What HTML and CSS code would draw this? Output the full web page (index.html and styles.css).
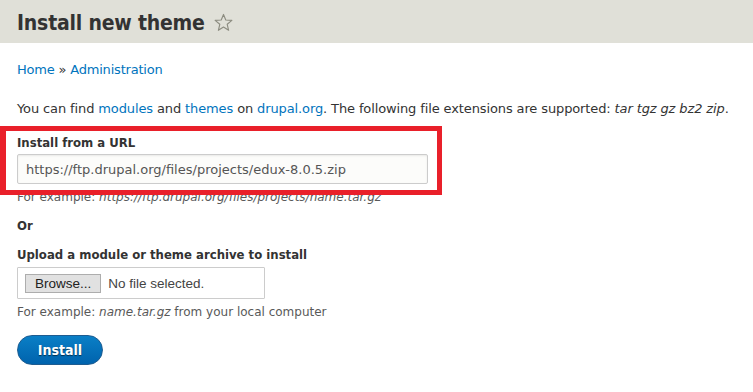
FILE: index.html
```html
<!DOCTYPE html>
<html>
<head>
<meta charset="utf-8">
<link rel="stylesheet" href="styles.css">
</head>
<body>
<header class="page-head">
  <h1 class="title">Install new theme <span class="star"><svg width="19" height="19" viewBox="0 0 20 20"><path d="M10 1.5 L12.4 7.4 L18.8 7.8 L13.9 11.9 L15.4 18.2 L10 14.8 L4.6 18.2 L6.1 11.9 L1.2 7.8 L7.6 7.4 Z" fill="none" stroke="#8c8c80" stroke-width="1.2" stroke-linejoin="round"/></svg></span></h1>
</header>
<main class="content">
  <nav class="crumbs"><a href="#">Home</a> » <a href="#">Administration</a></nav>
  <p class="intro">You can find <a href="#">modules</a> and <a href="#">themes</a> on <a href="#">drupal.org</a>. The following file extensions are supported: <em>tar tgz gz bz2 zip</em>.</p>
  <div class="url-block">
    <div class="highlight">
      <label class="label">Install from a URL</label>
      <div class="text-input">https://ftp.drupal.org/files/projects/edux-8.0.5.zip</div>
    </div>
    <div class="desc desc-under">For example: <em>https://ftp.drupal.org/files/projects/name.tar.gz</em></div>
  </div>
  <div class="or">Or</div>
  <label class="label upload-label">Upload a module or theme archive to install</label>
  <div class="file-input"><span class="browse">Browse...</span><span class="nofile">No file selected.</span></div>
  <div class="desc file-desc">For example: <em>name.tar.gz</em> from your local computer</div>
  <button class="install">Install</button>
</main>
</body>
</html>
```
FILE: styles.css
```css
html, body { margin: 0; padding: 0; background: #fff; }
body {
  font-family: "DejaVu Sans", "Open Sans", sans-serif;
  font-size: 13px;
  color: #333;
  width: 753px;
  height: 392px;
  overflow: hidden;
}
a { color: #0074bd; text-decoration: none; }
.page-head {
  background: #e0e0d8;
  height: 43px;
  padding: 0 17px;
  display: flex;
  align-items: center;
}
.title {
  margin: 0;
  font-family: "DejaVu Sans Condensed", "DejaVu Sans", sans-serif;
  font-size: 21px;
  font-weight: bold;
  color: #333;
  display: flex;
  align-items: center;
  gap: 9px;
  line-height: 26px;
  margin-top: 2px;
  letter-spacing: -0.2px;
}
.star { display: flex; margin-top: -1px; }
.content { padding: 0 17px; }
.crumbs { margin-top: 18px; line-height: 17px; letter-spacing: -0.2px; }
.intro { margin: 22px 0 0; line-height: 17px; letter-spacing: -0.12px; }
.intro em { font-style: italic; }
.url-block { position: relative; margin-top: 9px; }
.highlight {
  margin-left: -17px;
  width: 420px;
  border: 5px solid #e9202a;
  border-left-width: 6px;
  padding: 3px 0 6px 11px;
  position: relative;
  z-index: 1;
}
.label {
  display: block;
  font-family: "DejaVu Sans Condensed", "DejaVu Sans", sans-serif;
  font-weight: bold;
  line-height: 17px;
  margin-bottom: 3px;
}
.text-input {
  border: 1px solid #ccc;
  border-radius: 2px;
  background: #fcfcfa;
  box-sizing: border-box;
  width: 411px;
  height: 30px;
  padding: 0 8px;
  display: flex;
  align-items: center;
  font-size: 13px;
  color: #555;
  box-shadow: inset 0 1px 2px rgba(0,0,0,0.08);
}
.desc { font-size: 12px; color: #595959; line-height: 16px; }
.desc em { font-style: italic; }
.desc-under { margin-top: -6px; }
.or {
  font-family: "DejaVu Sans Condensed", "DejaVu Sans", sans-serif;
  font-weight: bold;
  margin-top: 12px;
  line-height: 17px;
}
.upload-label { margin-top: 12px; margin-bottom: 4px; }
.file-input {
  width: 248px;
  height: 32px;
  box-sizing: border-box;
  border: 1px solid #ccc;
  border-radius: 1px;
  background: #fff;
  display: flex;
  align-items: center;
  padding-left: 7px;
  gap: 7px;
  font-family: "Liberation Sans", Arial, sans-serif;
  font-size: 13.5px;
}
.browse {
  border: 1px solid #adadad;
  background: #e1e1e1;
  padding: 1px 9px;
  line-height: 15px;
  color: #222;
}
.nofile { color: #444; }
.file-desc { margin-top: 5px; }
.install {
  display: block;
  margin-top: 15px;
  width: 86px;
  height: 30px;
  border-radius: 15px;
  border: 1px solid #1e5c90;
  background: linear-gradient(#0a7fc6, #0063ad);
  color: #fff;
  font-family: "DejaVu Sans Condensed", "DejaVu Sans", sans-serif;
  font-weight: bold;
  font-size: 14px;
  text-shadow: 0 1px 1px rgba(0,0,0,0.55);
  padding: 0;
}
```
